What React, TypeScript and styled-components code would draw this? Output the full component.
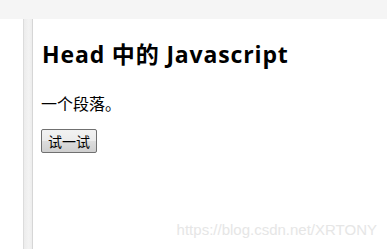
import React from "react";
import styled, { createGlobalStyle } from "styled-components";

const Global = createGlobalStyle`
  html, body { margin: 0; padding: 0; background: #fff; }
  body { width: 387px; height: 249px; overflow: hidden; }
  #root { height: 249px; }
`;

const Frame = styled.div`
  position: relative;
  width: 387px;
  height: 249px;
  display: flex;
  flex-direction: column;
  background: #fff;
  overflow: hidden;
`;

const TopBar = styled.div`
  height: 19px;
  flex: none;
  background: #f5f5f5;
`;

const Body = styled.div`
  flex: 1;
  display: flex;
`;

const LeftPane = styled.div`
  width: 23px;
  flex: none;
  background: #fff;
`;

const Splitter = styled.div`
  width: 10px;
  flex: none;
  box-sizing: border-box;
  border-left: 1px solid #dcdcdc;
  border-right: 1px solid #d6d6d6;
  background: linear-gradient(to right, #ececec, #f3f3f3 60%, #ededed);
`;

const Content = styled.div`
  flex: 1;
  display: flex;
  flex-direction: column;
  align-items: flex-start;
  padding: 0 0 0 8px;
  color: #000;
`;

const Heading = styled.h1`
  margin: 21px 0 0 1px;
  font-size: 23px;
  line-height: 28px;
  letter-spacing: 0.85px;
  font-weight: 700;
  white-space: nowrap;
  font-family: "Open Sans", "Noto Sans CJK SC", sans-serif;
`;

const Para = styled.p`
  margin: 25px 0 0 0;
  font-size: 16px;
  line-height: 20px;
  font-family: "Noto Sans CJK SC", sans-serif;
`;

const TryButton = styled.button`
  margin-top: 16px;
  height: 24px;
  width: 56px;
  padding: 0;
  box-sizing: border-box;
  border: 1px solid #707070;
  border-radius: 2px;
  background: linear-gradient(#f2f2f2, #ebebeb 50%, #dddddd 51%, #cfcfcf);
  font-family: "Noto Sans CJK SC", sans-serif;
  font-size: 14px;
  line-height: 20px;
  color: #000;
`;

const Watermark = styled.div`
  position: absolute;
  right: 10px;
  bottom: 11px;
  font-family: "Liberation Sans", Arial, sans-serif;
  font-size: 15px;
  color: #e6e6e6;
  white-space: nowrap;
`;

export default function App() {
  return (
    <>
      <Global />
      <Frame>
        <TopBar />
        <Body>
          <LeftPane />
          <Splitter />
          <Content>
            <Heading>Head 中的 Javascript</Heading>
            <Para>一个段落。</Para>
            <TryButton type="button">试一试</TryButton>
          </Content>
        </Body>
        <Watermark>https://blog.csdn.net/XRTONY</Watermark>
      </Frame>
    </>
  );
}
